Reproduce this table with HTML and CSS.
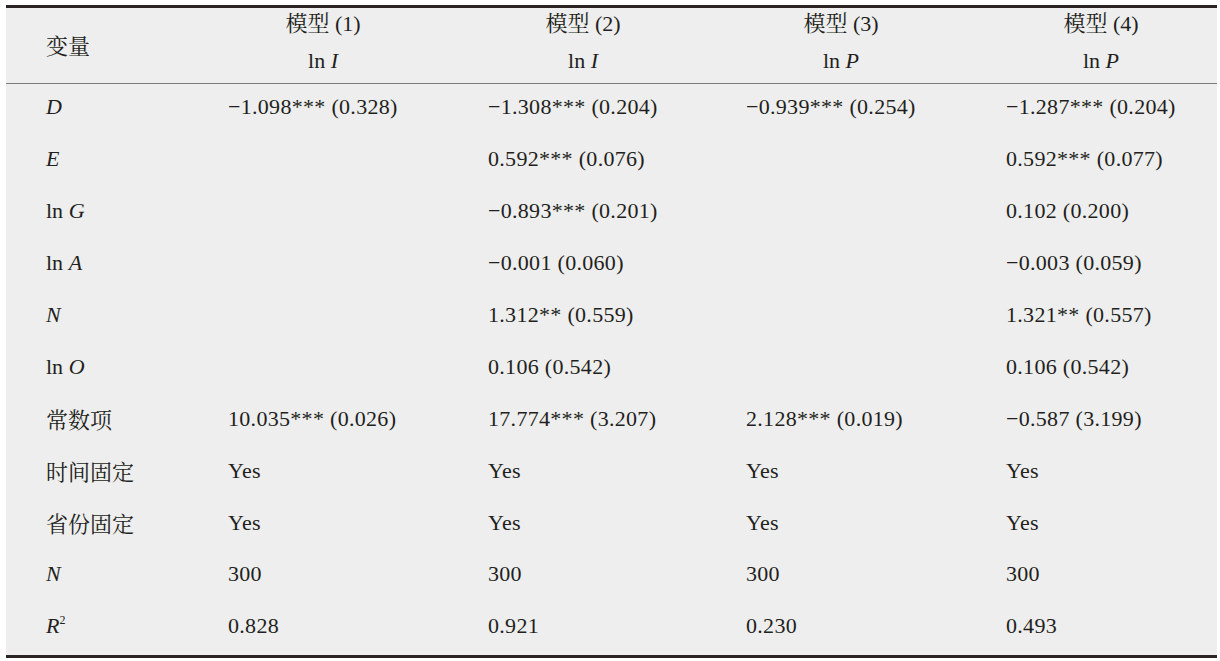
FILE: index.html
```html
<!DOCTYPE html>
<html lang="zh">
<head>
<meta charset="utf-8">
<title>回归结果</title>
<link rel="stylesheet" href="styles.css">
</head>
<body>
<table class="reg">
  <colgroup>
    <col class="c-label">
    <col class="c-m1">
    <col class="c-m2">
    <col class="c-m3">
    <col class="c-m4">
  </colgroup>
  <thead>
    <tr>
      <th class="lbl">变量</th>
      <th><div class="hd"><span>模型 (1)</span><span>ln <i>I</i></span></div></th>
      <th><div class="hd"><span>模型 (2)</span><span>ln <i>I</i></span></div></th>
      <th><div class="hd"><span>模型 (3)</span><span>ln <i>P</i></span></div></th>
      <th><div class="hd"><span>模型 (4)</span><span>ln <i>P</i></span></div></th>
    </tr>
  </thead>
  <tbody>
    <tr><td class="lbl"><i>D</i></td><td>−1.098*** (0.328)</td><td>−1.308*** (0.204)</td><td>−0.939*** (0.254)</td><td>−1.287*** (0.204)</td></tr>
    <tr><td class="lbl"><i>E</i></td><td></td><td>0.592*** (0.076)</td><td></td><td>0.592*** (0.077)</td></tr>
    <tr><td class="lbl">ln <i>G</i></td><td></td><td>−0.893*** (0.201)</td><td></td><td>0.102 (0.200)</td></tr>
    <tr><td class="lbl">ln <i>A</i></td><td></td><td>−0.001 (0.060)</td><td></td><td>−0.003 (0.059)</td></tr>
    <tr><td class="lbl"><i>N</i></td><td></td><td>1.312** (0.559)</td><td></td><td>1.321** (0.557)</td></tr>
    <tr><td class="lbl">ln <i>O</i></td><td></td><td>0.106 (0.542)</td><td></td><td>0.106 (0.542)</td></tr>
    <tr><td class="lbl">常数项</td><td>10.035*** (0.026)</td><td>17.774*** (3.207)</td><td>2.128*** (0.019)</td><td>−0.587 (3.199)</td></tr>
    <tr><td class="lbl">时间固定</td><td>Yes</td><td>Yes</td><td>Yes</td><td>Yes</td></tr>
    <tr><td class="lbl">省份固定</td><td>Yes</td><td>Yes</td><td>Yes</td><td>Yes</td></tr>
    <tr><td class="lbl"><i>N</i></td><td>300</td><td>300</td><td>300</td><td>300</td></tr>
    <tr><td class="lbl"><i>R</i><sup>2</sup></td><td>0.828</td><td>0.921</td><td>0.230</td><td>0.493</td></tr>
  </tbody>
</table>
</body>
</html>
```

FILE: styles.css
```css
html, body {
  margin: 0;
  padding: 0;
  background: #ffffff;
}

body {
  padding: 5px 3px 0 6px;
  font-family: "Liberation Serif", "Noto Serif CJK SC", "Noto Sans CJK SC", serif;
  color: #231f20;
}

.reg {
  width: 1211px;
  border-collapse: collapse;
  table-layout: fixed;
  background: #eeeeee;
  border-top: 3px solid #2a2425;
  border-bottom: 3px solid #2a2425;
  font-size: 22px;
}

.c-label { width: 222px; }
.c-m1 { width: 260px; }
.c-m2 { width: 258px; }
.c-m3 { width: 260px; }
.c-m4 { width: 211px; }

.reg th {
  font-weight: normal;
  text-align: left;
  padding: 0 0 6px 0;
  height: 69px;
  vertical-align: middle;
  border-bottom: 1px solid #7d7b7b;
}

.reg th.lbl {
  padding-left: 40px;
  padding-bottom: 3px;
}

.hd {
  width: 190px;
  display: flex;
  flex-direction: column;
  align-items: center;
  gap: 11px;
  line-height: 26px;
}

.reg td {
  padding: 0 0 5px 0;
  height: 46.9px;
  vertical-align: middle;
  white-space: nowrap;
  letter-spacing: 0.3px;
}

.reg td.lbl {
  padding-left: 40px;
  letter-spacing: 0;
}

.reg i {
  font-style: italic;
}

.reg sup {
  font-size: 12px;
  vertical-align: 9px;
  line-height: 0;
}
```
